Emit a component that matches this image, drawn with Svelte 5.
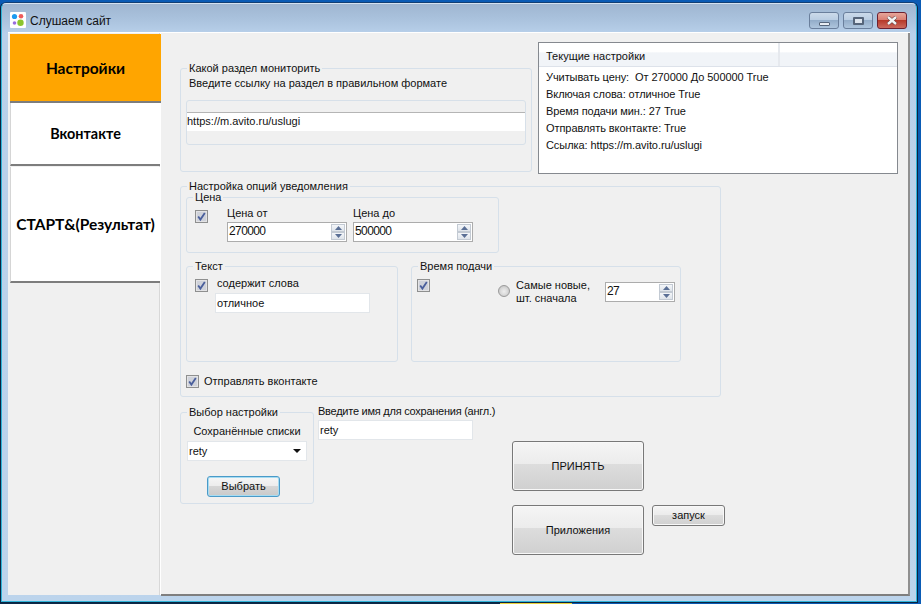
<script>
  const tabs = [
    { label: 'Настройки', cls: 'tab-active' },
    { label: 'Вконтакте', cls: 'tab-vk' },
    { label: 'СТАРТ&(Результат)', cls: 'tab-start' }
  ];
  const current = [
    'Учитывать цену:  От 270000 До 500000 True',
    'Включая слова: отличное True',
    'Время подачи мин.: 27 True',
    'Отправлять вконтакте: True',
    'Ссылка: https://m.avito.ru/uslugi'
  ];
</script>

{#snippet check()}
  <svg class="check" width="13" height="13" viewBox="0 0 13 13">
    <rect x="0.5" y="0.5" width="12" height="12" fill="#e3e3e5" stroke="#8e8f8f"/>
    <rect x="2" y="2" width="9" height="9" fill="#cfd2da"/>
    <path d="M3.2 6.5 L5.4 9.6 L9.8 3" fill="none" stroke="#4a5f9c" stroke-width="1.8"/>
  </svg>
{/snippet}

{#snippet spin()}
  <span class="spin">
    <span class="spin-btn"><svg width="7" height="4" viewBox="0 0 7 4"><path d="M3.5 0 L7 4 H0 Z" fill="#5a6f95"/></svg></span>
    <span class="spin-btn"><svg width="7" height="4" viewBox="0 0 7 4"><path d="M0 0 H7 L3.5 4 Z" fill="#5a6f95"/></svg></span>
  </span>
{/snippet}

<div class="desktop">
  <div class="window">
    <div class="frame">
      <header class="titlebar">
        <svg class="app-icon" width="16" height="16" viewBox="0 0 16 16">
          <rect width="16" height="16" rx="1" fill="#fff"/>
          <circle cx="4.5" cy="4.5" r="2.6" fill="#1d9bf0"/>
          <circle cx="11" cy="4.3" r="2.3" fill="#ef5b5b"/>
          <circle cx="4.5" cy="11" r="1.8" fill="#9a6ee0"/>
          <circle cx="10.5" cy="10.8" r="3.2" fill="#8cc52d"/>
        </svg>
        <span class="title">Слушаем сайт</span>
        <div class="caption">
          <span class="cap cap-min"><i></i></span>
          <span class="cap cap-max"><i></i></span>
          <span class="cap cap-close">
            <svg width="12" height="9" viewBox="0 0 12 9">
              <path d="M2 1 L10 8 M10 1 L2 8" stroke="#5b3a3a" stroke-width="3.6"/>
              <path d="M2 1 L10 8 M10 1 L2 8" stroke="#f4f4f4" stroke-width="2.4"/>
            </svg>
          </span>
        </div>
      </header>

      <div class="client">
        <nav class="sidebar">
          {#each tabs as t}
            <div class="tab {t.cls}">{t.label}</div>
          {/each}
        </nav>

        <main class="panel">
          <div class="row-top">
            <section class="group g-monitor">
              <span class="legend">Какой раздел мониторить</span>
              <p class="hint">Введите ссылку на раздел в правильном формате</p>
              <div class="url-strip">
                <div class="url-input">https://m.avito.ru/uslugi</div>
              </div>
            </section>

            <section class="current">
              <div class="cur-head"><span class="cur-col">Текущие настройки</span><span class="cur-rest"></span></div>
              <div class="cur-list">
                {#each current as line}<div class="cur-line">{line}</div>{/each}
              </div>
            </section>
          </div>

          <section class="group g-options">
            <span class="legend">Настройка опций уведомления</span>

            <section class="group g-price">
              <span class="legend">Цена</span>
              {@render check()}
              <div class="field f-from">
                <span class="field-label">Цена от</span>
                <div class="numeric">270000{@render spin()}</div>
              </div>
              <div class="field f-to">
                <span class="field-label">Цена до</span>
                <div class="numeric">500000{@render spin()}</div>
              </div>
            </section>

            <div class="opt-row">
              <section class="group g-text">
                <span class="legend">Текст</span>
                {@render check()}
                <div class="text-col">
                  <div class="contains">содержит слова</div>
                  <div class="input word">отличное</div>
                </div>
              </section>

              <section class="group g-time">
                <span class="legend">Время подачи</span>
                {@render check()}
                <span class="radio"></span>
                <div class="radio-label">Самые новые,<br>шт. сначала</div>
                <div class="numeric n-time">27{@render spin()}</div>
              </section>
            </div>

            <div class="send">{@render check()}<span>Отправлять вконтакте</span></div>
          </section>

          <div class="row-bottom">
            <section class="group g-pick">
              <span class="legend">Выбор настройки</span>
              <div class="saved">Сохранённые списки</div>
              <div class="combo"><span>rety</span><svg width="8" height="4" viewBox="0 0 8 4"><path d="M0 0 H8 L4 4 Z" fill="#111"/></svg></div>
              <button class="btn-pick">Выбрать</button>
            </section>

            <div class="save-col">
              <div class="save-label">Введите имя для сохранения (англ.)</div>
              <div class="input save-name">rety</div>
              <div class="actions">
                <button class="btn btn-big">ПРИНЯТЬ</button>
                <div class="actions-row">
                  <button class="btn btn-big">Приложения</button>
                  <button class="btn btn-small">запуск</button>
                </div>
              </div>
            </div>
          </div>
        </main>
      </div>
    </div>
  </div>
</div>

<style>
  :global(body) { margin: 0; background: #0a4a8c; }
  .desktop {
    box-sizing: border-box; width: 921px; height: 604px; overflow: hidden; padding-top: 2px;
    background: linear-gradient(90deg, #0b2a4a 0, #0b2a4a 500px, #e8d13a 500px, #e8d13a 572px, #0a5bb5 572px);
    font: 11px/13px "Liberation Sans", Arial, sans-serif; color: #111;
    position: relative;
  }
  .desktop::before { content: ""; position: absolute; left: 0; right: 0; top: 0; height: 603px; background: #0a5bb5; }
  .window {
    position: relative;
    box-sizing: border-box; width: 918px; height: 601px;
    border: 1px solid #0b2340; border-top-color: #123f74;
    border-radius: 6px 6px 0 0;
  }
  .frame {
    box-sizing: border-box; height: 100%; padding: 0 6px 5px 6px;
    background: linear-gradient(180deg, #9fb6d1 0, #a9c1dc 14px, #b8d0ea 30px, #bcd4ec 100%);
    border: 1px solid #2fb4d8; border-top-color: #d5e2f0;
    border-radius: 5px 5px 0 0;
    display: flex; flex-direction: column;
  }
  .titlebar { height: 28px; display: flex; align-items: center; flex: none; }
  .app-icon { margin: 4px 0 0 2px; }
  .title { margin: 6px 0 0 4px; font-size: 12px; color: #111; }
  .caption { margin: 0 3px 0 auto; display: flex; gap: 4px; align-self: flex-start; padding-top: 8px; }
  .cap { box-sizing: border-box; height: 17px; border: 1px solid #6a7f9c; border-radius: 3px; display: flex; align-items: center; justify-content: center; width: 30px; }
  .cap-min, .cap-max { background: linear-gradient(180deg, #cbdaea 0, #b9cde2 48%, #93adc9 50%, #aec5dd 100%); }
  .cap-min i { width: 11px; height: 4px; margin-top: 6px; background: #e8edf3; border: 1px solid #56657a; box-sizing: border-box; border-radius: 1px; }
  .cap-max i { width: 11px; height: 8px; background: #dde5ee; border: 2px solid #56657a; box-sizing: border-box; border-radius: 1px; }
  .cap-close { border-color: #6d2130; background: linear-gradient(180deg, #e6a69a 0, #d97c70 48%, #b63a2a 50%, #cc6a5e 100%); }

  .client { flex: 1; min-height: 0; display: flex; border-top: 1px solid #fff; }
  .sidebar { width: 153px; flex: none; background: #f0f0f0; box-shadow: inset -1px 0 0 #fff, inset -2px 0 0 #d8d8d8; box-sizing: border-box; padding: 1px 0 0 2px; margin-bottom: 1px; }
  .tab {
    box-sizing: border-box; width: 150px; background: #fff; border-bottom: 2px solid #7d7d7d;
    display: flex; align-items: center; justify-content: center;
    font: 700 14.4px "Lato", "Open Sans", sans-serif; color: #000;
    border-left: 1px solid #d5d5d5; white-space: nowrap;
  }
  .tab-active { height: 69px; background: #ffa500; font-size: 15.5px; width: 151px; border-left: 0; }
  .tab-vk { height: 63px; }
  .tab-start { height: 116px; margin-top: 1px; font-size: 15.5px; }

  .panel { flex: 1; min-width: 0; box-sizing: border-box; padding-left: 19px; background: #f0f0f0; border-bottom: 2px solid #7f7f7f; border-right: 2px solid #8f8f8f; }

  .group { box-sizing: border-box; position: relative; border: 1px solid #d6e0ea; border-radius: 3px; }
  .legend { position: absolute; top: -7px; left: 6px; padding: 0 2px; background: #f0f0f0; white-space: nowrap; }

  .row-top { display: flex; align-items: flex-start; height: 153px; }
  .g-monitor { width: 352px; height: 104px; margin-top: 35px; padding: 8px 5px 0 5px; }
  .hint { margin: 0 0 0 3px; }
  .url-strip { margin-top: 10px; height: 45px; border: 1px solid #d7e0e9; border-radius: 3px; padding-top: 11px; box-sizing: border-box; }
  .url-input { height: 19px; background: #fff; border-top: 1px solid #b5b5b5; box-sizing: border-box; padding: 2px 0 0 0; }

  .current { box-sizing: border-box; width: 360px; height: 132px; margin: 9px 0 0 6px; background: #fff; border: 1px solid #85898f; }
  .cur-head { height: 24px; display: flex; background: linear-gradient(180deg, #fff 0, #fff 40%, #f1f4f8 42%, #f1f4f8 100%); border-bottom: 1px solid #dde2ea; box-sizing: border-box; }
  .cur-col { box-sizing: border-box; width: 241px; padding: 7px 0 0 7px; border-right: 2px solid #e6e9ee; }
  .cur-list { padding: 2px 0 0 7px; }
  .cur-line { height: 17px; line-height: 17px; white-space: pre; letter-spacing: -0.07px; }

  .g-options { width: 541px; height: 211px; padding: 10px 5px 0 5px; }
  .g-price { width: 313px; height: 56px; display: flex; padding-left: 8px; }
  .g-price .check, .g-text .check, .g-time .check { margin-top: 12px; flex: none; }
  .field { display: flex; flex-direction: column; margin-top: 9px; }
  .f-from { margin-left: 19px; }
  .f-to { margin-left: 6px; }
  .field-label { height: 13px; margin-bottom: 2px; }

  .numeric { box-sizing: border-box; position: relative; width: 120px; height: 20px; background: #fff; border: 1px solid #acacac; padding: 2px 0 0 1px; font-size: 12px; letter-spacing: -0.6px; }
  .spin { position: absolute; right: 1px; top: 1px; width: 14px; height: 16px; display: flex; flex-direction: column; }
  .spin-btn { flex: 1; display: flex; align-items: center; justify-content: center; background: linear-gradient(180deg, #f4f6f9, #dfe4ea); border: 1px solid #c3cad3; box-sizing: border-box; }

  .opt-row { display: flex; margin-top: 13px; gap: 13px; }
  .g-text { width: 212px; height: 96px; display: flex; padding-left: 8px; }
  .text-col { margin: 10px 0 0 7px; }
  .contains { margin-bottom: 3px; padding-left: 2px; }
  .input { box-sizing: border-box; background: #fff; border: 1px solid #e2e6ea; height: 20px; padding: 3px 0 0 1px; }
  .word { width: 155px; }
  .g-time { width: 270px; height: 96px; display: flex; padding-left: 5px; }
  .radio { flex: none; width: 12px; height: 12px; border-radius: 50%; margin: 18px 0 0 68px; background: radial-gradient(circle at 50% 55%, #eee 0, #ddd 40%, #bbb 100%); border: 1px solid #9a9a9a; box-sizing: border-box; }
  .radio-label { margin: 12px 0 0 6px; width: 84px; }
  .n-time { width: 70px; margin: 15px 0 0 5px; }

  .send { display: flex; align-items: center; margin-top: 13px; gap: 5px; }

  .row-bottom { display: flex; margin-top: 15px; }
  .g-pick { width: 134px; height: 92px; padding: 12px 6px 0 6px; text-align: center; }
  .saved { height: 13px; }
  .combo { box-sizing: border-box; height: 20px; margin-top: 3px; background: #fff; border: 1px solid #e2e6ea; display: flex; align-items: center; justify-content: space-between; padding: 0 5px 0 1px; }
  .btn-pick { display: block; width: 73px; height: 21px; margin: 15px 0 0 20px; padding: 0; font: inherit; color: #111; border: 1px solid #4a9ac8; border-radius: 3px; background: linear-gradient(180deg, #f6f6f6 0, #ededed 45%, #d6d6d6 50%, #c9c9c9 100%); box-shadow: inset 0 0 0 1px #a6dcf2; }
  .save-col { margin-left: 4px; }
  .save-label { height: 12px; margin-top: -7px; white-space: nowrap; line-height: 12px; letter-spacing: -0.25px; }
  .save-name { width: 155px; margin-top: 3px; }
  .actions { margin: 1px 0 0 194px; }
  .actions-row { display: flex; align-items: flex-start; margin-top: 14px; gap: 8px; }
  .btn { padding: 0; font: inherit; color: #111; border: 1px solid #787878; border-radius: 3px; background: linear-gradient(180deg, #f5f5f5 0, #ececec 45%, #dddddd 46%, #d0d0d0 100%); box-shadow: inset 0 0 0 1px #f8f8f8; display: block; }
  .btn-big { width: 132px; height: 50px; }
  .btn-small { width: 73px; height: 21px; }
</style>
